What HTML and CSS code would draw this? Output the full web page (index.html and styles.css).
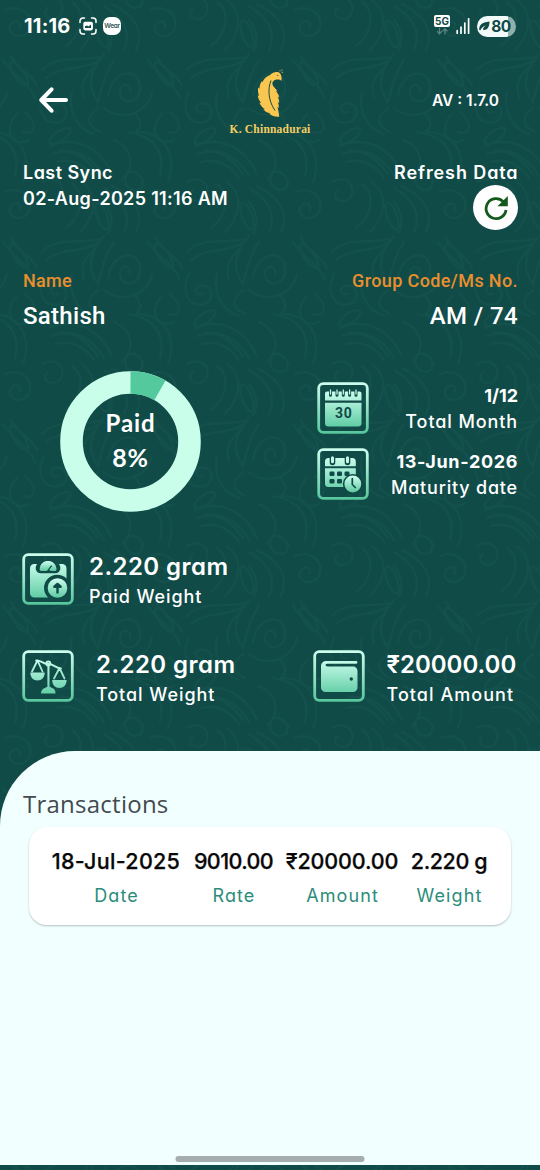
FILE: index.html
```html
<!DOCTYPE html>
<html lang="en">
<head>
<meta charset="utf-8">
<title>K. Chinnadurai</title>
<link rel="stylesheet" href="styles.css">
</head>
<body>
<svg class="backdrop" width="540" height="1170" aria-hidden="true">
  <defs>
    <linearGradient id="mint" x1="0" y1="0" x2="0" y2="1"><stop offset="0" stop-color="#d0fff0"/><stop offset="1" stop-color="#5cc9a0"/></linearGradient>
    <linearGradient id="mintFrame" gradientUnits="userSpaceOnUse" x1="0" y1="0" x2="0" y2="52"><stop offset="0" stop-color="#cffff0"/><stop offset="1" stop-color="#55c59b"/></linearGradient>
    <linearGradient id="mintArt" gradientUnits="userSpaceOnUse" x1="0" y1="8" x2="0" y2="45"><stop offset="0" stop-color="#cffff0"/><stop offset="1" stop-color="#5fcca4"/></linearGradient>
    <pattern id="damask" width="145" height="182" patternUnits="userSpaceOnUse" x="38" y="52">
      <g fill="none" stroke="#185650" stroke-width="2.2" stroke-linecap="round">
        <path d="M4 18C18 2 44 10 62 5M8 26C26 12 42 20 60 9M66 2C52 18 48 34 60 50C64 36 66 22 76 8"/>
        <path d="M70 44C74 16 104 14 102 38C100 54 80 52 82 38C84 30 94 32 92 40M66 56C82 70 110 62 114 40"/>
        <path d="M6 40C-2 56 4 74 22 70C34 64 28 48 16 52C10 56 14 62 20 60M34 40C30 58 38 76 56 82"/>
        <path d="M110 8C120 24 136 30 142 46M118 4C124 18 140 22 144 34M124 62C110 76 118 96 136 88M132 60C146 72 142 84 130 80"/>
        <path d="M12 94C34 84 60 92 74 122M14 102C36 94 54 104 66 124M18 110C34 106 46 112 56 126M76 88C94 96 98 114 84 128"/>
        <path d="M90 80C116 84 128 100 122 124M98 80C126 80 140 102 130 130M106 130C98 114 84 118 88 132C94 142 106 138 104 130"/>
        <path d="M4 130C18 122 30 134 22 146C12 154 2 144 10 138M34 132C48 142 44 164 28 176M44 130C62 144 56 166 42 180"/>
        <path d="M66 136C86 148 94 162 86 180M74 134C98 146 106 162 98 180M112 140C126 134 142 144 136 160C128 172 112 164 118 154C124 148 130 154 126 158"/>
        <path d="M22 98C40 100 50 108 60 122M60 56C50 64 46 72 62 80M96 60C104 70 104 74 98 80M58 14C46 24 42 32 46 46M70 182C76 172 74 160 66 150"/>
        <ellipse cx="22" cy="84" rx="12" ry="5" transform="rotate(-35 22 84)"/><ellipse cx="126" cy="22" rx="14" ry="5" transform="rotate(55 126 22)"/><ellipse cx="64" cy="164" rx="14" ry="5" transform="rotate(70 64 164)"/>
      </g>
    </pattern>
  </defs>
  <rect width="540" height="1170" fill="#104b47"/>
  <rect width="540" height="1170" fill="url(#damask)" opacity=".5"/>
</svg>
<div class="screen">
  <div class="status">
    <span class="clock">11:16</span>
    <svg class="shot" width="18" height="18" viewBox="0 0 18 18"><path d="M1 5.500V4a3 3 0 0 1 3-3h1.500M12.500 1H14a3 3 0 0 1 3 3v1.500M17 12.500V14a3 3 0 0 1-3 3h-1.500M5.500 17H4a3 3 0 0 1-3-3v-1.500" fill="none" stroke="#fff" stroke-width="1.500" stroke-linecap="round"/><rect x="4.300" y="4.700" width="9.600" height="8.700" rx="1.800" fill="#fff"/><path d="M6 11V9.300L8 8.500l1.500 1L12 7.500V11z" fill="#104a46"/></svg>
    <span class="wear">Wear</span>
    <div class="radio">
      <span class="fiveg">5G</span>
      <svg width="12" height="7" viewBox="0 0 12 7"><path d="M3.500 0v5.500M1 3.200l2.500 2.600L6 3.200M9 6.500V1M6.500 3.300L9 .8l2.500 2.500" fill="none" stroke="#5c8783" stroke-width="1.200"/></svg>
    </div>
    <svg class="signal" width="14" height="16" viewBox="0 0 14 16"><path d="M1.200 15.300v-2.600M5 15.300V9.200M8.800 15.300V5M12.600 15.300V.8" stroke="#fff" stroke-width="1.700" stroke-linecap="round"/></svg>
    <span class="battery"><svg width="11" height="10" viewBox="0 0 11 10"><path d="M.2 9C0 4 2.500 1.500 10.500.5c0 5-2 9-6 8.300C3.200 8.600 4.500 6 7 4.200 4 5.400 2.800 6.500 1.400 9.300z" fill="#104a46"/></svg>80</span>
  </div>

  <div class="header">
    <svg class="back" width="30" height="26" viewBox="0 0 30 26"><path d="M12.500 2.300L2.300 13l10.200 10.700M3 13h24" fill="none" stroke="#fff" stroke-width="4" stroke-linecap="round" stroke-linejoin="round"/></svg>
    <div class="logo">
      <svg width="30" height="49" viewBox="0 0 30 49"><path d="M26.300 12.500C26.200 11 25 10.300 23 10.500 19 10.500 17 12.500 17.500 15.500c.5 2.500 3.500 4 5 7l-1.800-.5c2 2 3.300 4.200 3.600 6.500l-1.700-.9c1.300 2.400 1.700 4.400 1.500 6.300l-1.300-1c1 2.400 1.100 4.300.8 6.200l-1.200-1c.9 2.500 1.200 5 1.900 9.600-3.800.4-7.300-.6-10-2.900l1-.6c-3-.4-5.300-1.700-7.100-3.900l1.900-.1c-2.800-1.600-4.700-3.800-5.700-6.700l1.900.6C4.200 31.600 3 29 2.700 26l1.600 1.200c-1.300-3-1.700-6-1-9l1.200 1.500c0-3 .8-5.500 2.400-7.700l.5 1.200C8.800 9.500 11.500 7.300 15 6c3-3 7.700-4.300 10-1.700 1.600 2 2 5 1.300 8.200z" fill="#f9c74f"/><path d="M16 11.500c-3.300 8-3 20 4 30" fill="none" stroke="#104a46" stroke-width="1"/><circle cx="22.800" cy="6.300" r=".6" fill="#104a46"/><g fill="#f9c74f"><circle cx="25" cy="1.800" r=".6"/><circle cx="27" cy="1" r=".6"/><circle cx="27.300" cy="3.300" r=".6"/></g></svg>
      <span>K. Chinnadurai</span>
    </div>
    <span class="version">AV : 1.7.0</span>
  </div>

  <div class="sync">
    <div class="col"><span class="t-last">Last Sync</span><span class="t-time">02-Aug-2025 11:16 AM</span></div>
    <div class="col end"><span class="t-refresh">Refresh Data</span>
      <span class="refresh"><svg width="26" height="26" viewBox="0 0 26 26"><path d="M20.200 6.600A10 10 0 1 0 23 15" fill="none" stroke="#145a1c" stroke-width="2.800"/><path d="M24.800 1v10.300H14.500z" fill="#145a1c"/></svg></span>
    </div>
  </div>

  <div class="member">
    <div class="col"><span class="key k-name">Name</span><span class="val v-name">Sathish</span></div>
    <div class="col end"><span class="key k-group">Group Code/Ms No.</span><span class="val v-group">AM / 74</span></div>
  </div>

  <div class="progress">
    <div class="donut">
      <svg width="141" height="141" viewBox="0 0 141 141"><circle cx="70.500" cy="70.500" r="59" fill="none" stroke="#c9ffea" stroke-width="22.600"/><path d="M70.500 11.500A59 59 0 0 1 99.900 19.400" fill="none" stroke="#54c99d" stroke-width="22.600"/></svg>
      <div class="donut-label"><span class="paid">Paid</span><span class="pct">8%</span></div>
    </div>
    <div class="terms">
      <div class="term">
        <svg width="52" height="52" viewBox="0 0 52 52"><rect x="1.700" y="1.700" width="48.600" height="48.600" rx="4.500" fill="none" stroke="url(#mintFrame)" stroke-width="2.800"/><path d="M8 18.500V11.500a2 2 0 0 1 2-2h32.500a2 2 0 0 1 2 2v7zM8 20.700h36.500V41a3.500 3.500 0 0 1-3.500 3.500H11.500A3.500 3.500 0 0 1 8 41z" fill="url(#mintArt)"/><path d="M13.500 9v4.300M20 9v4.300M26.300 9v4.300M32.600 9v4.300M39 9v4.300" stroke="#104a46" stroke-width="3" stroke-linecap="round"/><path d="M13.500 8v4M20 8v4M26.300 8v4M32.600 8v4M39 8v4" stroke="#c2fbe8" stroke-width="1.300" stroke-linecap="round"/><text class="day" x="26.700" y="36.300" text-anchor="middle">30</text></svg>
        <div class="col end"><span class="t-count">1/12</span><span class="t-month">Total Month</span></div>
      </div>
      <div class="term">
        <svg width="52" height="52" viewBox="0 0 52 52"><rect x="1.700" y="1.700" width="48.600" height="48.600" rx="4.500" fill="none" stroke="url(#mintFrame)" stroke-width="2.800"/><path d="M8 18.200V13.500a3.500 3.500 0 0 1 3.500-3.500h23.800a3.500 3.500 0 0 1 3.500 3.500v4.700zM8 20.200h30.800V39H11.500A3.500 3.500 0 0 1 8 35.500z" fill="url(#mintArt)"/><path d="M15.500 8.500v6M30.500 8.500v6" stroke="#104a46" stroke-width="5.600" stroke-linecap="round"/><path d="M15.500 9.800v4M30.500 9.800v4" stroke="#c2fbe8" stroke-width="3" stroke-linecap="round"/><g fill="#104a46"><rect x="12.500" y="23.500" width="5" height="4.500" rx="1.300"/><rect x="20" y="23.500" width="5" height="4.500" rx="1.300"/><rect x="27.500" y="23.500" width="5" height="4.500" rx="1.300"/><rect x="12.500" y="31" width="5" height="4.500" rx="1.300"/><rect x="20" y="31" width="5" height="4.500" rx="1.300"/><circle cx="35.800" cy="36" r="10"/></g><circle cx="35.800" cy="36" r="8.400" fill="url(#mint)"/><path d="M35.300 30.500v6l3 3" fill="none" stroke="#104a46" stroke-width="1.700" stroke-linecap="round"/></svg>
        <div class="col end"><span class="t-date">13-Jun-2026</span><span class="t-maturity">Maturity date</span></div>
      </div>
    </div>
  </div>

  <div class="stats paid-row">
    <svg width="52" height="52" viewBox="0 0 52 52"><rect x="1.700" y="1.700" width="48.600" height="48.600" rx="4.500" fill="none" stroke="url(#mintFrame)" stroke-width="2.800"/><path d="M12.500 11H15c-3 4.500-.5 9.300 3.500 9.300h15c4 0 6.500-4.800 3.500-9.300h2.500c3.500 0 5 2 5 4.500v10a12 12 0 0 0-18.500 18.900H12.500c-3 0-4.500-2-4.500-4.500V15.500c0-2.500 1.500-4.500 4.500-4.500z" fill="url(#mintArt)"/><path d="M17.700 15.700C18.200 10.500 21.800 8 26 8s7.800 2.500 8.500 7.700c.2 1.500-.8 2.300-1.900 2.300h-3.100l-2.500-1 3.300-3.900-1.200-.9-4.300 5.800h-5.200c-1.100 0-2.100-.8-1.900-2.300z" fill="url(#mint)"/><circle cx="35.500" cy="35" r="11.800" fill="#104a46"/><circle cx="35.500" cy="35" r="9.800" fill="url(#mint)"/><path d="M35.500 40.500v-9M32.300 33.700l3.200-2.700 3.200 2.700z" fill="#104a46" stroke="#104a46" stroke-width="2.400" stroke-linejoin="round"/></svg>
    <div class="col"><span class="num n-gram">2.220 gram</span><span class="cap c-paid">Paid Weight</span></div>
  </div>

  <div class="stats total-row">
    <svg width="52" height="52" viewBox="0 0 52 52"><rect x="1.700" y="1.700" width="48.600" height="48.600" rx="4.500" fill="none" stroke="url(#mintFrame)" stroke-width="2.800"/><g fill="none" stroke="url(#mintArt)" stroke-width="1.800" stroke-linecap="round" stroke-linejoin="round"><path d="M10 21.500l5.500-11 5 11M32 28.500l5.500-10.500 5 10.500M14 10.500c4-1 6.500 3.500 12.300 3.500s6.500 4 12.700 4.500"/><circle cx="26.300" cy="13.500" r="2"/></g><g fill="url(#mintArt)"><path d="M25.400 16h2.100v23h-2.100zM8.300 22.500h14.400c0 5-3 8-7.200 8s-7.200-3-7.200-8zM30.200 30h14.400c0 5-3 8-7.200 8s-7.200-3-7.200-8zM19 43.500c0-3.500 2-5 4-5.500l3.500-2 3.500 2c2 .5 3.500 2 3.500 5.500z"/></g></svg>
    <div class="col"><span class="num n-gram">2.220 gram</span><span class="cap c-total">Total Weight</span></div>
    <svg class="wallet" width="52" height="52" viewBox="0 0 52 52"><rect x="1.700" y="1.700" width="48.600" height="48.600" rx="4.500" fill="none" stroke="url(#mintFrame)" stroke-width="2.800"/><path d="M13 11h29.500q2 0 2 1.400t-2 1.400H14.500q-2 0-2 1.300t2 1.300h25.500a4.500 4.500 0 0 1 4.500 4.500V37.500a4.500 4.500 0 0 1-4.500 4.500H12.500A4.500 4.500 0 0 1 8 37.500V16a5 5 0 0 1 5-5z" fill="url(#mintArt)"/><circle cx="38.300" cy="29" r="1.700" fill="#104a46"/></svg>
    <div class="col"><span class="num n-amount">₹20000.00</span><span class="cap c-amount">Total Amount</span></div>
  </div>

  <div class="sheet">
    <h2>Transactions</h2>
    <div class="card">
      <div class="cell"><span class="v v-date">18-Jul-2025</span><span class="l l-date">Date</span></div>
      <div class="cell"><span class="v v-rate">9010.00</span><span class="l l-rate">Rate</span></div>
      <div class="cell"><span class="v v-amt">₹20000.00</span><span class="l l-amt">Amount</span></div>
      <div class="cell"><span class="v v-wt">2.220 g</span><span class="l l-wt">Weight</span></div>
    </div>
    <div class="home"></div>
  </div>
</div>
</body>
</html>
```
FILE: styles.css
```css
* { box-sizing: border-box; }
body { margin: 0; width: 540px; height: 1170px; overflow: hidden; background: #104a46; }
.backdrop { position: absolute; top: 0; left: 0; z-index: -1; }
.screen { display: flex; flex-direction: column; height: 1170px; color: #fff; font-family: Inter, "Liberation Sans", sans-serif; font-feature-settings: "cv11"; }
.screen svg { display: block; flex: none; }
span { white-space: nowrap; }
.col { display: flex; flex-direction: column; align-items: flex-start; }
.end { align-items: flex-end; }

.status { display: flex; align-items: center; height: 52px; padding: 0 24px; flex: none; }
.clock { font-size: 20px; font-weight: 700; line-height: 24px; width: 55px; letter-spacing: .2px; }
.wear { width: 18px; height: 18px; margin-left: 6px; border-radius: 7px; background: #fff; color: #31524f; font-size: 6.500px; font-weight: 600; line-height: 18px; text-align: center; letter-spacing: -.3px; }
.radio { display: flex; flex-direction: column; align-items: center; margin-left: auto; gap: 1px; margin-top: -3px; }
.fiveg { width: 16px; height: 12px; border-radius: 2px; background: #fff; color: #104a46; font-size: 10px; line-height: 12px; font-weight: 700; text-align: center; }
.signal { margin: 0 7px 0 6px; }
.battery { display: flex; align-items: center; justify-content: center; width: 39px; height: 21px; border-radius: 11px; background: linear-gradient(90deg, #f2fbfa 80%, #8fb0ad 80%); color: #104a46; font-size: 15.500px; font-weight: 700; line-height: 21px; letter-spacing: -.6px; gap: 1px; padding-right: 3px; }

.header { display: grid; grid-template-columns: 1fr auto 1fr; align-items: center; height: 96px; padding: 0 41px 0 39px; flex: none; }
.logo { display: flex; flex-direction: column; align-items: center; gap: 4px; margin: 4px -1px 0 1px; }
.logo span { color: #f4ce63; font: 700 11.500px/14px "Liberation Serif", serif; letter-spacing: .22px; }
.version { justify-self: end; font-size: 15.500px; font-weight: 600; }

.sync { display: flex; justify-content: space-between; height: 116px; padding: 12px 22px 0 23px; font-size: 18px; font-weight: 600; line-height: 26px; flex: none; }
.t-last { letter-spacing: .45px; }
.t-time { letter-spacing: .32px; }
.t-refresh { letter-spacing: .9px; margin-right: -.5px; }
.refresh { display: flex; align-items: center; justify-content: center; width: 45px; height: 45px; margin-top: -1px; border-radius: 50%; background: #fff; }

.member { display: flex; justify-content: space-between; height: 107px; padding: 5px 22px 0 23px; font-family: Roboto, sans-serif; flex: none; }
.key { color: #e98f2e; font-size: 18px; font-weight: 500; line-height: 24px; }
.val { margin-top: 8px; font-size: 24px; font-weight: 500; line-height: 30px; }
.k-name { letter-spacing: .3px; }
.k-group { letter-spacing: .38px; }
.v-name { letter-spacing: .3px; }
.v-group { letter-spacing: .4px; }

.progress { display: flex; justify-content: space-between; height: 182px; padding: 0 22px 0 60px; flex: none; }
.donut { display: grid; width: 141px; height: 141px; }
.donut > * { grid-area: 1 / 1; }
.donut-label { display: flex; flex-direction: column; align-items: center; justify-content: center; padding-bottom: 4px; font: 700 24px/34px Lato, sans-serif; }
.paid { letter-spacing: .9px; }
.pct { font-size: 25px; letter-spacing: .8px; }
.terms { display: flex; flex-direction: column; gap: 14px; width: 201px; padding-top: 11px; }
.term { display: flex; justify-content: space-between; height: 52px; font-size: 18px; line-height: 26px; }
.term .col { padding-top: 1px; }
.term > svg { margin-left: -.5px; }
.day { font: 700 14px Roboto, sans-serif; fill: #104a46; letter-spacing: .6px; }
.t-count, .t-date { font-weight: 700; }
.t-month, .t-maturity { font-weight: 500; }
.t-month { letter-spacing: .9px; }
.t-date { letter-spacing: .65px; }
.t-maturity { letter-spacing: .8px; }

.stats { display: flex; padding-left: 22px; flex: none; }
.stats .col { height: 52px; }
.num { font-size: 24px; font-weight: 600; line-height: 30px; margin-top: -1px; }
.cap { font-size: 18px; font-weight: 500; line-height: 30px; }
.n-gram { letter-spacing: .45px; }
.c-paid { letter-spacing: .9px; }
.c-total { letter-spacing: .95px; }
.c-amount { letter-spacing: 1.050px; }
.paid-row { height: 97px; gap: 15px; }
.total-row { height: 101px; gap: 22px; }
.total-row .num { margin-top: 0; }
.wallet { margin-left: auto; }
.total-row .col:last-child { width: 131px; margin-right: 22.500px; }

.sheet { display: flex; flex-direction: column; height: 414px; padding: 39px 29px 3px; border-top-left-radius: 75px; background: #f1ffff; flex: none; }
h2 { margin: 0 0 0 -6px; color: #444a50; font: 400 24px/28px "Open Sans", sans-serif; letter-spacing: .25px; }
.card { display: grid; grid-template-columns: 130px 80px 112px 77px; column-gap: 12.500px; height: 98px; margin-top: 9px; padding: 19px 0 0 22px; border-radius: 18px; background: #fff; box-shadow: 0 1px 2px rgba(0,0,0,.25); }
.cell { display: flex; flex-direction: column; align-items: center; gap: 5px; }
.v { color: #080808; font-size: 21.500px; font-weight: 500; line-height: 30px; -webkit-text-stroke: .25px #080808; }
.v-date { letter-spacing: .3px; }
.v-rate { letter-spacing: -.6px; }
.v-amt { letter-spacing: -.15px; }
.v-wt { letter-spacing: -.4px; }
.l { color: #2c8c7b; font-size: 18px; font-weight: 400; line-height: 30px; letter-spacing: 1.100px; margin-right: -1px; }
.home { width: 189px; height: 6px; margin: auto auto 0; border-radius: 3px; background: #a5adad; transform: translateX(-.5px); }
```
